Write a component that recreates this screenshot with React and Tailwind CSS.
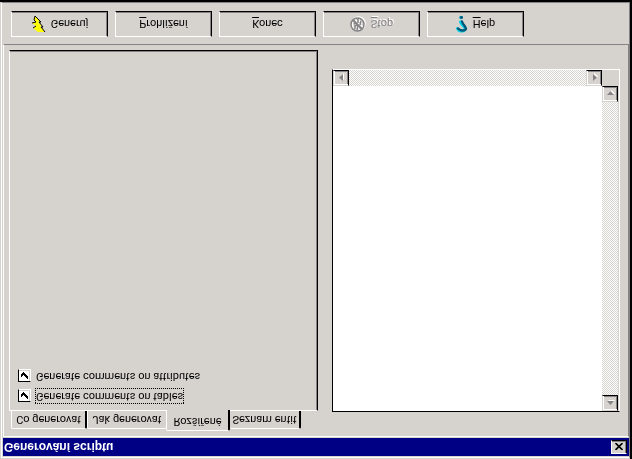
const face = "bg-[#d6d3ce]";
const track = "bg-[repeating-conic-gradient(#ffffff_0_25%,#d6d3ce_0_50%)] bg-[length:2px_2px]";

function ScrollButton({ points, label }) {
  return (
    <button
      aria-label={label}
      className={`flex size-4 shrink-0 items-center justify-center border border-[#d6d3ce] border-r-black border-b-black shadow-[inset_1px_1px_#ffffff,inset_-1px_-1px_#848284] ${face}`}
    >
      <svg viewBox="0 0 9 9" className="size-[9px]" aria-hidden="true">
        <polygon points={points} fill="#ffffff" transform="translate(1 1)" />
        <polygon points={points} fill="#848284" />
      </svg>
    </button>
  );
}

function BoltIcon() {
  return (
    <svg viewBox="0 0 15 18" className="h-[18px] w-[15px]" aria-hidden="true">
      <path
        d="M14 1H7L2 5L5 6V7L1 10L5 11L3 13L4 17L9 12L7 11L11 7H9Z"
        fill="#ffff00"
      />
      <path
        d="M14 1L10 6H12L8 11H10L4 17M4 17L3 13L5 11L1 10M5 7L2 5"
        fill="none"
        stroke="#000000"
      />
    </svg>
  );
}

function StopShape() {
  return (
    <>
      <circle cx="7.500" cy="7.500" r="6.500" strokeWidth="1.500" />
      <path d="M3 12L12 3" strokeWidth="2" />
      <path d="M5 3V6L7 7M7 2L8 6M10 7L11 11M8 9L8 13M4 8L6 9" strokeWidth="1.500" />
    </>
  );
}

function StopIcon() {
  return (
    <svg viewBox="0 0 16 16" className="size-4" fill="none" aria-hidden="true">
      <g stroke="#ffffff" transform="translate(1 1)">
        <StopShape />
      </g>
      <g stroke="#848284">
        <StopShape />
      </g>
    </svg>
  );
}

function HelpIcon() {
  return (
    <svg viewBox="0 0 12 18" className="h-[18px] w-3" fill="none" strokeLinecap="round" aria-hidden="true">
      <path d="M1.500 4.500C3 1.500 7 1 9 3.500C10 6 6 7 4.500 11" stroke="#00d0e8" strokeWidth="3" />
      <path d="M2 4.500C4 2.500 8 1.500 10 4C10.500 6 7 8 6 11.500" stroke="#005878" strokeWidth="2.400" />
      <circle cx="5" cy="15.500" r="1.800" fill="#00a8c8" />
      <circle cx="5.500" cy="15.500" r="1.400" fill="#005878" />
    </svg>
  );
}

const actions = [
  { accel: "", rest: "Generuj", icon: <BoltIcon /> },
  { accel: "P", rest: "rohlížení" },
  { accel: "K", rest: "onec" },
  { accel: "S", rest: "top", icon: <StopIcon />, disabled: true },
  { accel: "H", rest: "elp", icon: <HelpIcon /> },
];

function ActionButton({ accel, rest, icon, disabled }) {
  return (
    <button
      disabled={disabled}
      className={`flex h-[26px] w-[97px] items-center justify-center gap-[5px] border border-t-white border-l-white border-r-black border-b-black shadow-[inset_-1px_-1px_#848284] disabled:text-[#848284] disabled:[text-shadow:1px_1px_#ffffff] ${face}`}
    >
      {icon}
      <span>
        <span className="underline underline-offset-2">{accel}</span>
        {rest}
      </span>
    </button>
  );
}

function Tab({ children, selected, className }) {
  return (
    <button
      role="tab"
      aria-selected={selected}
      className={`rounded-t-[2px] border-t border-white text-center ${
        selected ? "relative -mb-px h-[21px] pb-1" : "h-[18px]"
      } ${face} ${className}`}
    >
      {children}
    </button>
  );
}

function CheckRow({ id, label, focused }) {
  return (
    <div className="flex h-4 items-center gap-1">
      <span className="grid size-[13px]">
        <input
          id={id}
          type="checkbox"
          defaultChecked
          className="col-start-1 row-start-1 size-[13px] appearance-none border border-t-black border-l-black border-r-white border-b-white bg-white shadow-[inset_-1px_-1px_#d6d3ce]"
        />
        <svg
          viewBox="0 0 13 13"
          className="pointer-events-none col-start-1 row-start-1 size-[13px]"
          shapeRendering="crispEdges"
          aria-hidden="true"
        >
          <path d="M3 5L5 7L10 2V5L5 10L3 8Z" fill="#000000" />
        </svg>
      </span>
      <label
        htmlFor={id}
        className={`border border-dotted leading-[14px] ${focused ? "border-black" : "border-transparent"}`}
      >
        {label}
      </label>
    </div>
  );
}

export default function App() {
  return (
    <div
      className={`flex h-screen -scale-y-100 flex-col border-r-2 border-b-2 border-black pt-px pl-px font-[Roboto,'Liberation_Sans',Arial,sans-serif] text-[11px] leading-[13px] text-black ${face}`}
    >
      <div className="flex min-h-0 flex-1 flex-col border border-t-white border-l-white border-r-[#848284] border-b-[#848284]">
        <header className="mt-px ml-px flex h-[18px] shrink-0 items-center justify-between bg-[#000084] pr-[2px] pl-px text-white">
          <h1 className="font-['Liberation_Sans',Arial,sans-serif] text-xs font-bold">Generování scriptu</h1>
          <button
            aria-label="Close"
            className={`flex h-[14px] w-4 items-center justify-center border border-t-white border-l-white border-r-black border-b-black shadow-[inset_-1px_-1px_#848284] ${face}`}
          >
            <svg viewBox="0 0 8 7" className="h-[7px] w-2" aria-hidden="true">
              <path d="M0.500 0L7.500 7M7.500 0L0.500 7" stroke="#000000" strokeWidth="1.600" />
            </svg>
          </button>
        </header>

        <main className="mt-px ml-px flex min-h-0 flex-1 gap-[14px] border border-t-white border-l-white border-r-[#848284] border-b-[#848284] pt-[5px] pr-2 pb-[5px] pl-[5px]">
          <section className="flex min-w-0 flex-[309] flex-col">
            <div role="tablist" className="flex items-end pl-[2px]">
              <Tab className="w-[76px] border-l border-r-2 border-r-black">Co generovat</Tab>
              <Tab className="w-[79px] border-l">Jak generovat</Tab>
              <Tab selected className="w-[64px] border-l border-r-2 border-r-black">
                Rozšířené
              </Tab>
              <Tab className="w-[71px] border-r-2 border-r-black">Seznam entit</Tab>
            </div>
            <div
              role="tabpanel"
              className="flex flex-1 flex-col gap-1 border border-t-white border-l-white border-r-black border-b-black pt-[6px] pl-2 shadow-[inset_-1px_-1px_#848284]"
            >
              <CheckRow id="tables" label="Generate comments on tables" focused />
              <CheckRow id="attributes" label="Generate comments on attributes" />
            </div>
          </section>

          <section className="mt-[19px] mb-[19px] flex min-w-0 flex-[285] flex-col border border-t-black border-l-black border-r-white border-b-white pr-px">
            <div className="flex min-h-0 flex-1">
              <textarea aria-label="Script" className="min-w-0 flex-1 resize-none bg-white outline-none" />
              <div className={`flex w-4 flex-col justify-between ${track}`}>
                <ScrollButton label="Scroll up" points="1,6 4.500,2 8,6" />
                <ScrollButton label="Scroll down" points="1,3 4.500,7 8,3" />
              </div>
            </div>
            <div className="flex">
              <div className={`flex flex-1 justify-between ${track}`}>
                <ScrollButton label="Scroll left" points="6,1 2,4.500 6,8" />
                <ScrollButton label="Scroll right" points="3,1 7,4.500 3,8" />
              </div>
              <div className="size-4" />
            </div>
          </section>
        </main>

        <footer className="flex h-[41px] shrink-0 items-start gap-[7px] pt-[7px] pl-[9px]">
          {actions.map((action) => (
            <ActionButton key={action.rest} {...action} />
          ))}
        </footer>
      </div>
    </div>
  );
}
